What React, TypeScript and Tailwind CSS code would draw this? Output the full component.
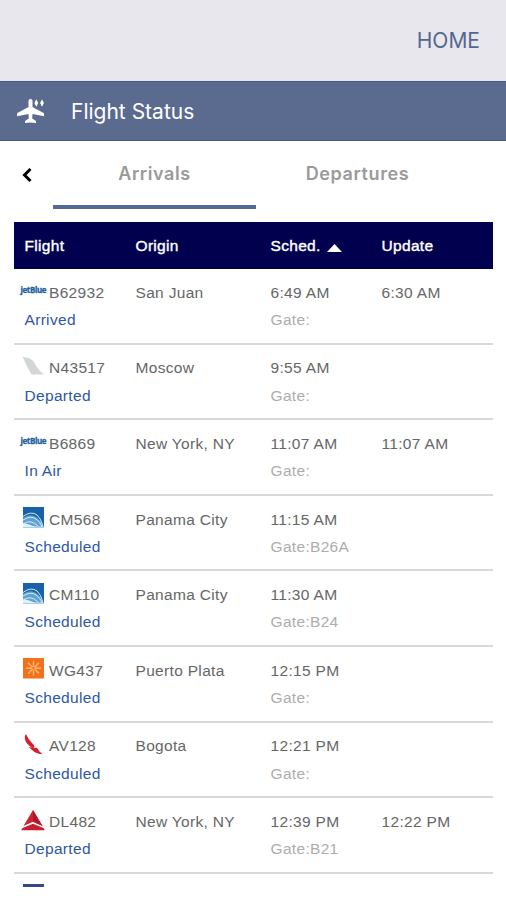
import React, { useState } from 'react';

type Airline = 'jetblue' | 'tail' | 'copa' | 'sunwing' | 'avianca' | 'delta' | 'other';

interface Flight {
  airline: Airline;
  number: string;
  status: string;
  city: string;
  sched: string;
  gate: string;
  update?: string;
}

const FLIGHTS: Flight[] = [
  { airline: 'jetblue', number: 'B62932', status: 'Arrived', city: 'San Juan', sched: '6:49 AM', gate: '', update: '6:30 AM' },
  { airline: 'tail', number: 'N43517', status: 'Departed', city: 'Moscow', sched: '9:55 AM', gate: '' },
  { airline: 'jetblue', number: 'B6869', status: 'In Air', city: 'New York, NY', sched: '11:07 AM', gate: '', update: '11:07 AM' },
  { airline: 'copa', number: 'CM568', status: 'Scheduled', city: 'Panama City', sched: '11:15 AM', gate: 'B26A' },
  { airline: 'copa', number: 'CM110', status: 'Scheduled', city: 'Panama City', sched: '11:30 AM', gate: 'B24' },
  { airline: 'sunwing', number: 'WG437', status: 'Scheduled', city: 'Puerto Plata', sched: '12:15 PM', gate: '' },
  { airline: 'avianca', number: 'AV128', status: 'Scheduled', city: 'Bogota', sched: '12:21 PM', gate: '' },
  { airline: 'delta', number: 'DL482', status: 'Departed', city: 'New York, NY', sched: '12:39 PM', gate: 'B21', update: '12:22 PM' },
];

const COLS = 'grid grid-cols-[111px_135px_111px_1fr] pl-[10.5px]';

const AirlineLogo: React.FC<{ airline: Airline }> = ({ airline }) => {
  switch (airline) {
    case 'jetblue':
      return (
        <span className="-ml-[4px] -mt-[1px] block w-[26px] whitespace-nowrap font-['Open_Sans',sans-serif] text-[8px] font-bold leading-[10px] tracking-[-0.4px] text-[#235f9d] [-webkit-text-stroke:0.3px_#235f9d]">
          jetBlue
        </span>
      );
    case 'tail':
      return (
        <svg width="22" height="22" viewBox="0 0 22 22" className="-ml-[3px]">
          <path d="M0.500 1.500 L8 3.500 Q11 5 13 9 Q16 15 22 19.500 H9.500 Q5 12 0.500 1.500Z" fill="#d3d6d6" />
        </svg>
      );
    case 'copa':
      return (
        <svg width="22" height="22" viewBox="0 0 22 22" className="-ml-[1.5px]">
          <rect y="1" width="21" height="20.5" fill="#1762a9" />
          <path d="M0 12 Q7 7 13 11 Q18 14 19.500 20 L21 21.500 H0Z" fill="#5fa3d6" />
          <g fill="none" stroke="#d3e9f6" strokeWidth="1">
            <path d="M0 10.500 Q8 4.500 14 9 Q18 12.500 20 20" />
            <path d="M0 14 Q8 9 13 13 Q17 15.500 19 20.500" />
            <path d="M1 17.500 Q8 13 15 20" />
          </g>
          <path d="M0 17 Q6 18 10 20 Q15 21 20 20 L21 21.500 H0Z" fill="#e3f0f8" />
        </svg>
      );
    case 'sunwing':
      return (
        <svg width="22" height="22" viewBox="0 0 22 22" className="-ml-[1.5px]">
          <rect y="1" width="21" height="20.5" fill="#f2711f" />
          <path
            d="M10.500 4.500 V8.500 M10.500 14 V18 M3.500 11.200 H8 M13 11.200 H17.500 M5.500 6.200 L8.700 9.400 M12.500 13 L15.500 16 M15.500 6.200 L12.400 9.400 M8.700 13 L5.500 16.200"
            stroke="#ffb968"
            strokeWidth="1.400"
            strokeLinecap="round"
          />
          <circle cx="10.5" cy="11.2" r="1.8" fill="none" stroke="#ffb968" strokeWidth="1" />
        </svg>
      );
    case 'avianca':
      return (
        <svg width="22" height="22" viewBox="0 0 22 22" className="-ml-[1.5px]">
          <path d="M3 1 Q0 5 4 10.500 L9.500 15.500 L11.500 14 Q11.500 12 9 10 Q5 6 3 1Z" fill="#d61f2b" />
          <path d="M5.500 14 L11 15 Q14 14 15 16 L16 18 L19.500 21.200 Q12 20.500 8.500 16.500Z" fill="#d61f2b" />
        </svg>
      );
    case 'delta':
      return (
        <svg width="24" height="22" viewBox="0 0 24 22" className="-ml-[3.5px]">
          <path d="M12 1 L21.500 17 L12 12.800 L2.500 17Z" fill="#d02232" />
          <path d="M12 1 L21.500 17 L12 12.800Z" fill="#b3192a" />
          <path d="M12 14.800 L22.500 19 L23.800 21.200 H0.200 L1.500 19Z" fill="#c81f30" />
        </svg>
      );
    default:
      return (
        <svg width="22" height="22" viewBox="0 0 22 22" className="-ml-[1.5px]">
          <rect width="21" height="21" fill="#34478a" />
        </svg>
      );
  }
};

const FlightRow: React.FC<{ flight: Flight }> = ({ flight }) => (
  <div className={`${COLS} h-[75.6px] shrink-0 border-b-2 border-[#d9d9d9] pt-[9.8px] leading-[27.2px]`}>
    <div>
      <div className="flex items-center">
        <div className="-mt-[4px] flex h-[22px] w-[24.5px] shrink-0 items-center"><AirlineLogo airline={flight.airline} /></div>
        <span>{flight.number}</span>
      </div>
      <div className="text-[#2e57a4]">{flight.status}</div>
    </div>
    <div>{flight.city}</div>
    <div>
      <div>{flight.sched}</div>
      <div className="text-[#adadad]">Gate:{flight.gate}</div>
    </div>
    <div>{flight.update}</div>
  </div>
);

export default function App() {
  const [tab, setTab] = useState<'arrivals' | 'departures'>('arrivals');

  return (
    <div className="flex h-[900px] w-[506px] flex-col overflow-hidden bg-white font-['Liberation_Sans',Arial,sans-serif]">
      <header className="flex h-[81px] shrink-0 items-center justify-end bg-[#e8e7ed] pr-[26px]">
        <button className="font-['Inter',sans-serif] text-[21px] text-[#56678f]">HOME</button>
      </header>

      <div className="flex h-[60px] shrink-0 items-center border-y border-[#465b84] bg-[#5b6b90] pl-[17px] text-white">
        <svg width="28" height="26" viewBox="0 0 28 26" fill="currentColor">
          <path d="M11.500 2.500 Q13.500 -1 15.500 2.500 V9 L27 15.200 V18.200 L15.500 16 L15.200 20.500 L19 23 V25 L13.500 24.400 L8 25 V23 L11.800 20.500 L11.500 16 L0 18.200 V15.200 L11.500 9Z" />
          <path d="M19.300 1.200 L21.200 5 L19.300 8.800 L17.400 5Z M25 1.200 L26.900 5 L25 8.800 L23.100 5Z" />
        </svg>
        <h1 className="ml-[26px] mt-[2px] font-['Inter',sans-serif] text-[21px]">Flight Status</h1>
      </div>

      <nav className="flex h-[68px] shrink-0 font-['Inter',sans-serif] text-[18px] font-semibold tracking-[0.6px] text-[#9a9a9a]">
        <button className="flex w-[53px] items-center justify-center text-black">
          <svg width="12" height="16" viewBox="0 0 12 16" fill="none" stroke="currentColor" strokeWidth="3">
            <path d="M9.500 2 L3.500 8 L9.500 14" />
          </svg>
        </button>
        <button
          onClick={() => setTab('arrivals')}
          className={`w-[203px] border-b-4 ${tab === 'arrivals' ? 'border-[#526a94]' : 'border-transparent'}`}
        >
          Arrivals
        </button>
        <button
          onClick={() => setTab('departures')}
          className={`w-[203px] border-b-4 ${tab === 'departures' ? 'border-[#526a94]' : 'border-transparent'}`}
        >
          Departures
        </button>
      </nav>

      <main className="ml-[14px] mt-[13px] flex h-[665px] w-[479px] shrink-0 flex-col overflow-hidden text-[15.5px] tracking-[0.32px] text-[#666]">
        <div className={`${COLS} h-[47px] shrink-0 items-center bg-[#00004f] text-white [-webkit-text-stroke:0.4px_white]`}>
          <div>Flight</div>
          <div>Origin</div>
          <div className="flex items-center">
            Sched.
            <svg width="15" height="8" viewBox="0 0 14 8" className="ml-[6px] mt-[4px]" preserveAspectRatio="none">
              <path d="M7 0 L14 8 H0Z" fill="currentColor" />
            </svg>
          </div>
          <div>Update</div>
        </div>
        {FLIGHTS.map(f => <FlightRow key={f.number} flight={f} />)}
        <div className={`${COLS} shrink-0 pt-[10.2px]`}>
          <AirlineLogo airline="other" />
        </div>
      </main>
    </div>
  );
}
